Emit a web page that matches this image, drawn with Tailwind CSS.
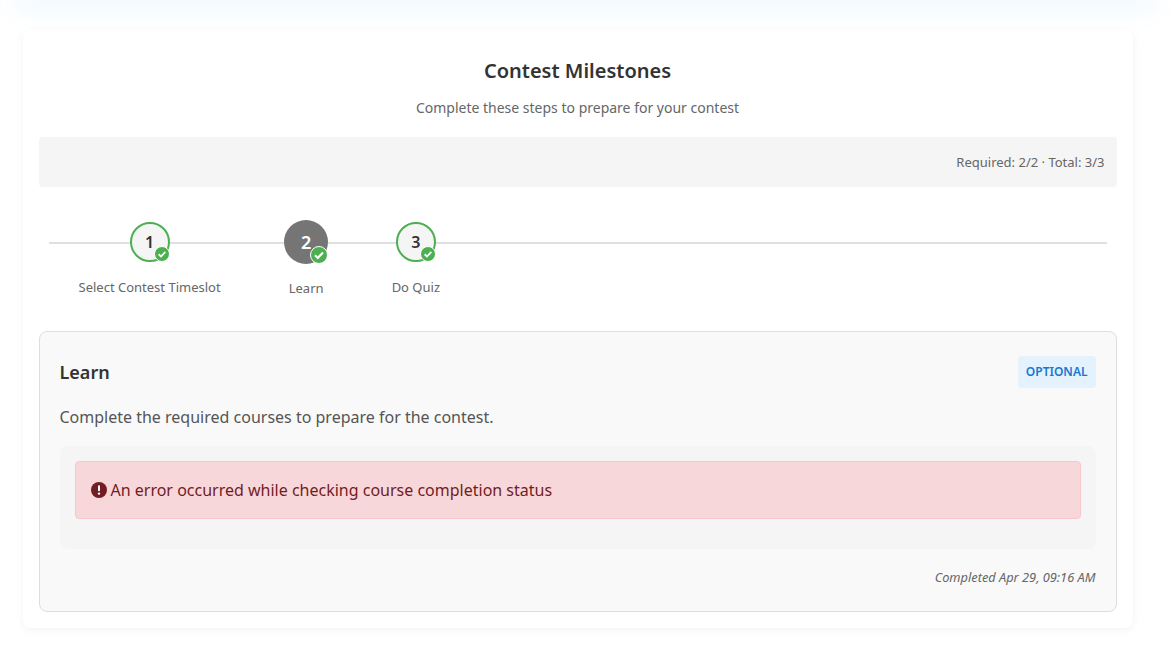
<!DOCTYPE html>
<html lang="en">

<head>
    <meta charset="UTF-8">
    <meta name="viewport" content="width=device-width, initial-scale=1.0">
    <script src="https://cdn.jsdelivr.net/npm/@tailwindcss/browser@4"></script>
    <title>Contest Milestones</title>
</head>

<body class="bg-white font-['Noto_Sans',sans-serif] text-[#333] h-[649px] overflow-hidden">
    <!-- bottom edge of the header above the fold, only its shadow shows -->
    <div class="h-0 mx-[23px] shadow-[0_0_24px_8px_rgba(33,150,243,0.09)]"></div>

    <div class="ml-[22.5px] mt-[30px] w-[1110px] h-[598px] bg-white rounded-lg shadow-[0_2px_10px_rgba(0,0,0,0.05)] p-4">
        <h2 class="text-center text-[20px] leading-[27px] font-semibold mt-[11px]">Contest Milestones</h2>
        <p class="text-center text-sm leading-[19px] text-[#666] mt-[14px]">Complete these steps to prepare for your contest</p>

        <div class="mt-5 h-[50px] bg-[#f5f5f5] rounded flex items-center justify-end px-3 pt-0.5 text-[13px] text-[#666]">
            Required: 2/2 · Total: 3/3
        </div>

        <!-- stepper -->
        <div class="relative mt-[33px] mx-[10px] px-[30px] flex gap-[63.5px] h-[76px]">
            <div class="absolute left-0 right-0 top-[22px] h-0.5 bg-[#e0e0e0]"></div>

            <div class="relative z-10 flex flex-col items-center">
                <div class="h-11 flex items-center">
                    <div class="relative w-10 h-10 rounded-full border-2 border-[#4caf50] bg-[#f5f5f5] flex items-center justify-center font-semibold text-base">
                        1
                        <span class="absolute -right-[2px] -bottom-[2px] w-4 h-4 rounded-full bg-[#4caf50] border border-white flex items-center justify-center">
                            <svg class="w-2.5 h-2.5" viewBox="0 0 12 12" fill="none" stroke="white" stroke-width="2.2"><path d="M2 6.3 4.8 9 10 3.4"/></svg>
                        </span>
                    </div>
                </div>
                <span class="mt-[15px] text-[13px] leading-[18px] text-[#666] whitespace-nowrap">Select Contest Timeslot</span>
            </div>

            <div class="relative z-10 flex flex-col items-center">
                <div class="h-11 flex items-center">
                    <div class="relative w-11 h-11 rounded-full bg-[#757575] text-white flex items-center justify-center font-semibold text-lg">
                        2
                        <span class="absolute right-0 bottom-0 w-[18px] h-[18px] rounded-full bg-[#4caf50] border border-white flex items-center justify-center">
                            <svg class="w-3 h-3" viewBox="0 0 12 12" fill="none" stroke="white" stroke-width="2.2"><path d="M2 6.3 4.8 9 10 3.4"/></svg>
                        </span>
                    </div>
                </div>
                <span class="mt-[15px] text-[13px] leading-[18px] text-[#666] whitespace-nowrap">Learn</span>
            </div>

            <div class="relative z-10 flex flex-col items-center">
                <div class="h-11 flex items-center">
                    <div class="relative w-10 h-10 rounded-full border-2 border-[#4caf50] bg-[#f5f5f5] flex items-center justify-center font-semibold text-base">
                        3
                        <span class="absolute -right-[2px] -bottom-[2px] w-4 h-4 rounded-full bg-[#4caf50] border border-white flex items-center justify-center">
                            <svg class="w-2.5 h-2.5" viewBox="0 0 12 12" fill="none" stroke="white" stroke-width="2.2"><path d="M2 6.3 4.8 9 10 3.4"/></svg>
                        </span>
                    </div>
                </div>
                <span class="mt-[15px] text-[13px] leading-[18px] text-[#666] whitespace-nowrap">Do Quiz</span>
            </div>
        </div>

        <!-- active milestone -->
        <div class="mt-[35px] h-[281px] border border-[#ddd] rounded-lg bg-[#f9f9f9] px-5 pt-6">
            <div class="flex items-center justify-between h-8">
                <h3 class="text-lg font-semibold">Learn</h3>
                <span class="h-8 px-2 flex items-center bg-[#e3f2fd] text-[#1976d2] text-xs font-semibold rounded">OPTIONAL</span>
            </div>
            <p class="mt-[18px] text-base leading-[22px] text-[#555]">Complete the required courses to prepare for the contest.</p>
            <div class="mt-[18px] p-[15px] h-[103px] bg-[#f5f5f5] rounded-lg">
                <div class="h-[58px] px-[15px] flex items-center gap-1 bg-[#f8d7da] border border-[#f5c6cb] rounded text-[#721c24] text-base">
                    <svg class="w-4 h-4 shrink-0" viewBox="0 0 16 16"><circle cx="8" cy="8" r="8" fill="#721c24"/><rect x="7" y="3.2" width="2" height="6" rx="1" fill="#fff"/><circle cx="8" cy="11.6" r="1.2" fill="#fff"/></svg>
                    <span>An error occurred while checking course completion status</span>
                </div>
            </div>
            <p class="mt-[19px] text-right text-[12.8px] italic leading-[18px] text-[#666]">Completed Apr 29, 09:16 AM</p>
        </div>
    </div>
</body>

</html>
